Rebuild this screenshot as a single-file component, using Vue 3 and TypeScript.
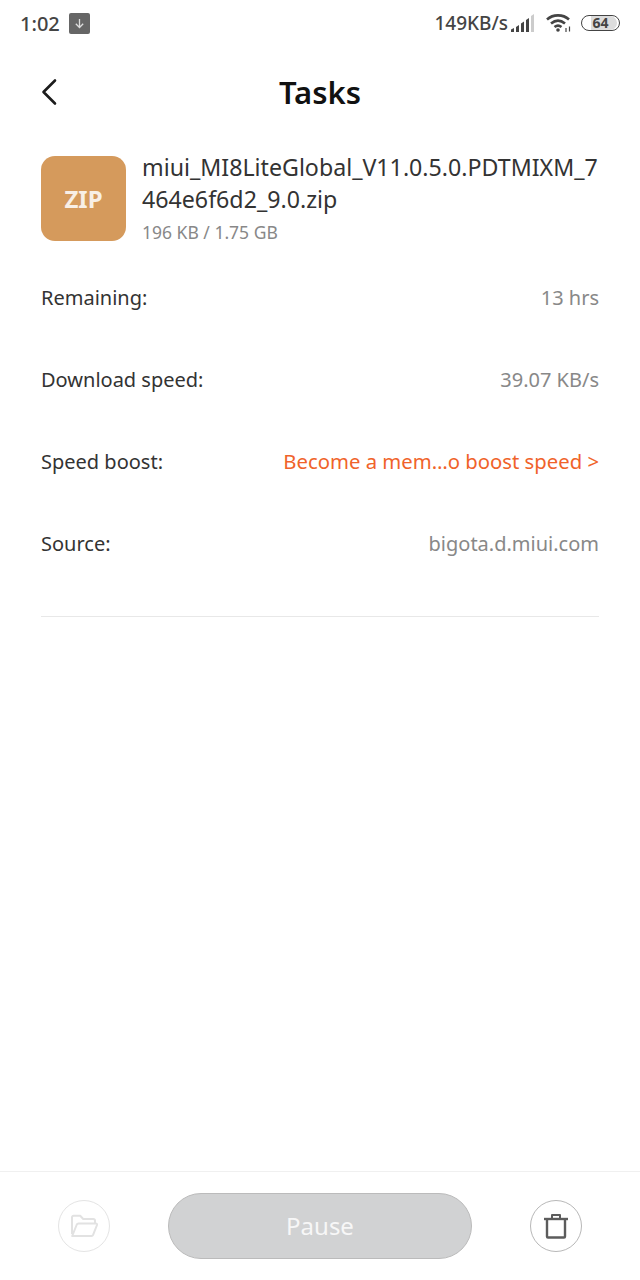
<script setup lang="ts">
const rows = [
  { label: "Remaining:", value: "13 hrs", accent: false },
  { label: "Download speed:", value: "39.07 KB/s", accent: false },
  { label: "Speed boost:", value: "Become a mem…o boost speed >", accent: true },
  { label: "Source:", value: "bigota.d.miui.com", accent: false },
];
</script>

<template>
  <div class="page">
    <div class="status">
      <div class="status__left">
        <span class="status__time">1:02</span>
        <span class="status__badge">
          <svg width="13" height="13" viewBox="0 0 13 13" fill="none" stroke="#ddd" stroke-width="1.3">
            <path d="M6.5 2v8.5M2.8 6.8l3.7 3.7 3.7-3.7" />
          </svg>
        </span>
      </div>
      <div class="status__right">
        <span class="status__speed">149KB/s</span>
        <svg class="status__signal" width="24" height="18" viewBox="0 0 24 18">
          <path d="M0 15.500L3 14v4H0z" fill="#444" />
          <path d="M5 13l3-2v7H5z" fill="#444" />
          <path d="M10 9.500l3-2V18h-3z" fill="#444" />
          <path d="M15 6l3-2v14h-3z" fill="#444" />
          <path d="M20 2l3-2v18h-3z" fill="#ccc" />
        </svg>
        <svg class="status__wifi" width="26" height="20" viewBox="0 0 26 20" fill="none" stroke="#444" stroke-width="2.600">
          <path d="M1 6.500C7 1 17 1 23 6.500" />
          <path d="M5 10.500c4.500-3.800 9.500-3.800 14 0" />
          <path d="M8.500 14c2.500-2 4.500-2 7 0" />
          <circle cx="12" cy="17" r="1.800" fill="#444" stroke="none" />
          <path d="M20 15v4M23.500 13.500v5" stroke-width="1.200" />
        </svg>
        <span class="status__battery"><span class="status__level"></span><span class="status__pct">64</span></span>
      </div>
    </div>

    <header class="head">
      <button class="head__back" aria-label="Back">
        <svg width="18" height="28" viewBox="0 0 18 28" fill="none" stroke="#1c1c1c" stroke-width="2.600" stroke-linecap="round" stroke-linejoin="round">
          <path d="M15 2.500L3.500 14 15 25.500" />
        </svg>
      </button>
      <h1 class="head__title">Tasks</h1>
    </header>

    <section class="file">
      <div class="file__icon">ZIP</div>
      <div class="file__info">
        <div class="file__name">miui_MI8LiteGlobal_V11.0.5.0.PDTMIXM_7<br />464e6f6d2_9.0.zip</div>
        <div class="file__size">196 KB / 1.75 GB</div>
      </div>
    </section>

    <section class="rows">
      <div v-for="row in rows" :key="row.label" class="row">
        <span class="row__label">{{ row.label }}</span>
        <span class="row__value" :class="{ 'row__value--accent': row.accent }">{{ row.value }}</span>
      </div>
    </section>

    <div class="divider"></div>

    <footer class="foot">
      <button class="foot__round foot__round--off" aria-label="Open folder">
        <svg width="30" height="26" viewBox="0 0 30 26" fill="none" stroke="#e2e2e2" stroke-width="2" stroke-linejoin="round">
          <path d="M3 21V4.500C3 3.500 3.700 2.800 4.700 2.800h6.500l3 3.200h10c1 0 1.800.7 1.800 1.800v2.500" />
          <path d="M3.200 23h19.300c.8 0 1.300-.4 1.600-1.100L28 12c.2-.9-.3-1.600-1.200-1.600H9.500c-.8 0-1.400.4-1.700 1.100L3.200 23z" />
        </svg>
      </button>
      <button class="foot__pause">Pause</button>
      <button class="foot__round" aria-label="Delete">
        <svg width="26" height="26" viewBox="0 0 26 26" fill="none" stroke="#5c5c5c" stroke-width="2.400" stroke-linejoin="round">
          <path d="M1 6h24" />
          <path d="M9 6V2h8v4" stroke-width="2" />
          <path d="M4 6v17.500c0 .6.400 1 1 1h16c.6 0 1-.4 1-1V6" />
        </svg>
      </button>
    </footer>
  </div>
</template>

<style scoped>
.page {
  position: relative;
  display: flex;
  flex-direction: column;
  height: 1280px;
  width: 640px;
  background: #fff;
  font-family: "Noto Sans", sans-serif;
  color: #333;
  overflow: hidden;
}

.status {
  display: flex;
  justify-content: space-between;
  align-items: center;
  height: 46px;
  padding: 0 20px;
  color: #444;
}

.status__left,
.status__right {
  display: flex;
  align-items: center;
}

.status__time {
  font-size: 20px;
  font-weight: 500;
}

.status__badge {
  display: flex;
  align-items: center;
  justify-content: center;
  width: 21px;
  height: 21px;
  margin-left: 9px;
  border-radius: 2px;
  background: #666;
}

.status__speed {
  font-size: 19px;
  font-weight: 500;
}

.status__signal {
  margin-left: 3px;
}

.status__wifi {
  margin-left: 11px;
}

.status__battery {
  position: relative;
  display: block;
  width: 37px;
  height: 14px;
  margin-left: 9px;
  border: 1.500px solid #444;
  border-radius: 9px;
}

.status__level {
  position: absolute;
  left: 24%;
  right: 6%;
  top: 0;
  bottom: 0;
  border-radius: 0 7px 7px 0;
  background: #dcdcdc;
}

.status__pct {
  position: absolute;
  inset: 0;
  font-size: 14px;
  font-weight: 700;
  line-height: 14px;
  text-align: center;
}

.head {
  position: relative;
  display: flex;
  justify-content: center;
  align-items: center;
  height: 92px;
}

.head__back {
  position: absolute;
  left: 40px;
  top: 32px;
  padding: 0;
  border: 0;
  background: none;
  line-height: 0;
}

.head__title {
  margin: 0;
  font-size: 31px;
  font-weight: 600;
  color: #111;
}

.file {
  display: flex;
  gap: 16px;
  padding: 18px 41px 0;
}

.file__icon {
  display: flex;
  flex: none;
  align-items: center;
  justify-content: center;
  width: 85px;
  height: 85px;
  border-radius: 14px;
  background: #d59a5c;
  color: #f8efe6;
  font-size: 24px;
  font-weight: 700;
}

.file__info {
  margin-top: -5px;
}

.file__name {
  font-size: 23.200px;
  line-height: 32px;
  white-space: nowrap;
  color: #333;
}

.file__size {
  margin-top: 6px;
  font-size: 17.500px;
  line-height: 23px;
  color: #888;
}

.rows {
  display: flex;
  flex-direction: column;
  padding: 13px 41px 0;
}

.row {
  display: flex;
  justify-content: space-between;
  align-items: center;
  height: 81.800px;
  font-size: 20px;
}

.row__label {
  color: #333;
}

.row__value {
  color: #888;
}

.row__value--accent {
  font-size: 20.300px;
  color: #f0632a;
}

.divider {
  height: 1px;
  margin: 32px 41px 0;
  background: #e8e8e8;
}

.foot {
  position: absolute;
  left: 0;
  right: 0;
  top: 1171px;
  display: flex;
  align-items: center;
  justify-content: space-between;
  height: 109px;
  padding: 0 58px 0;
  border-top: 1px solid #f0f0f0;
  box-sizing: border-box;
}

.foot__round {
  display: flex;
  align-items: center;
  justify-content: center;
  width: 52px;
  height: 52px;
  padding: 0;
  border: 1px solid #b8b8b8;
  border-radius: 50%;
  background: #fff;
}

.foot__round--off {
  border-color: #e4e4e4;
}

.foot__pause {
  width: 304px;
  height: 66px;
  padding-bottom: 3px;
  border: 1px solid #bbb;
  border-radius: 33px;
  background: #d1d2d3;
  color: #f7f7f7;
  font-family: inherit;
  font-size: 24px;
}
</style>
